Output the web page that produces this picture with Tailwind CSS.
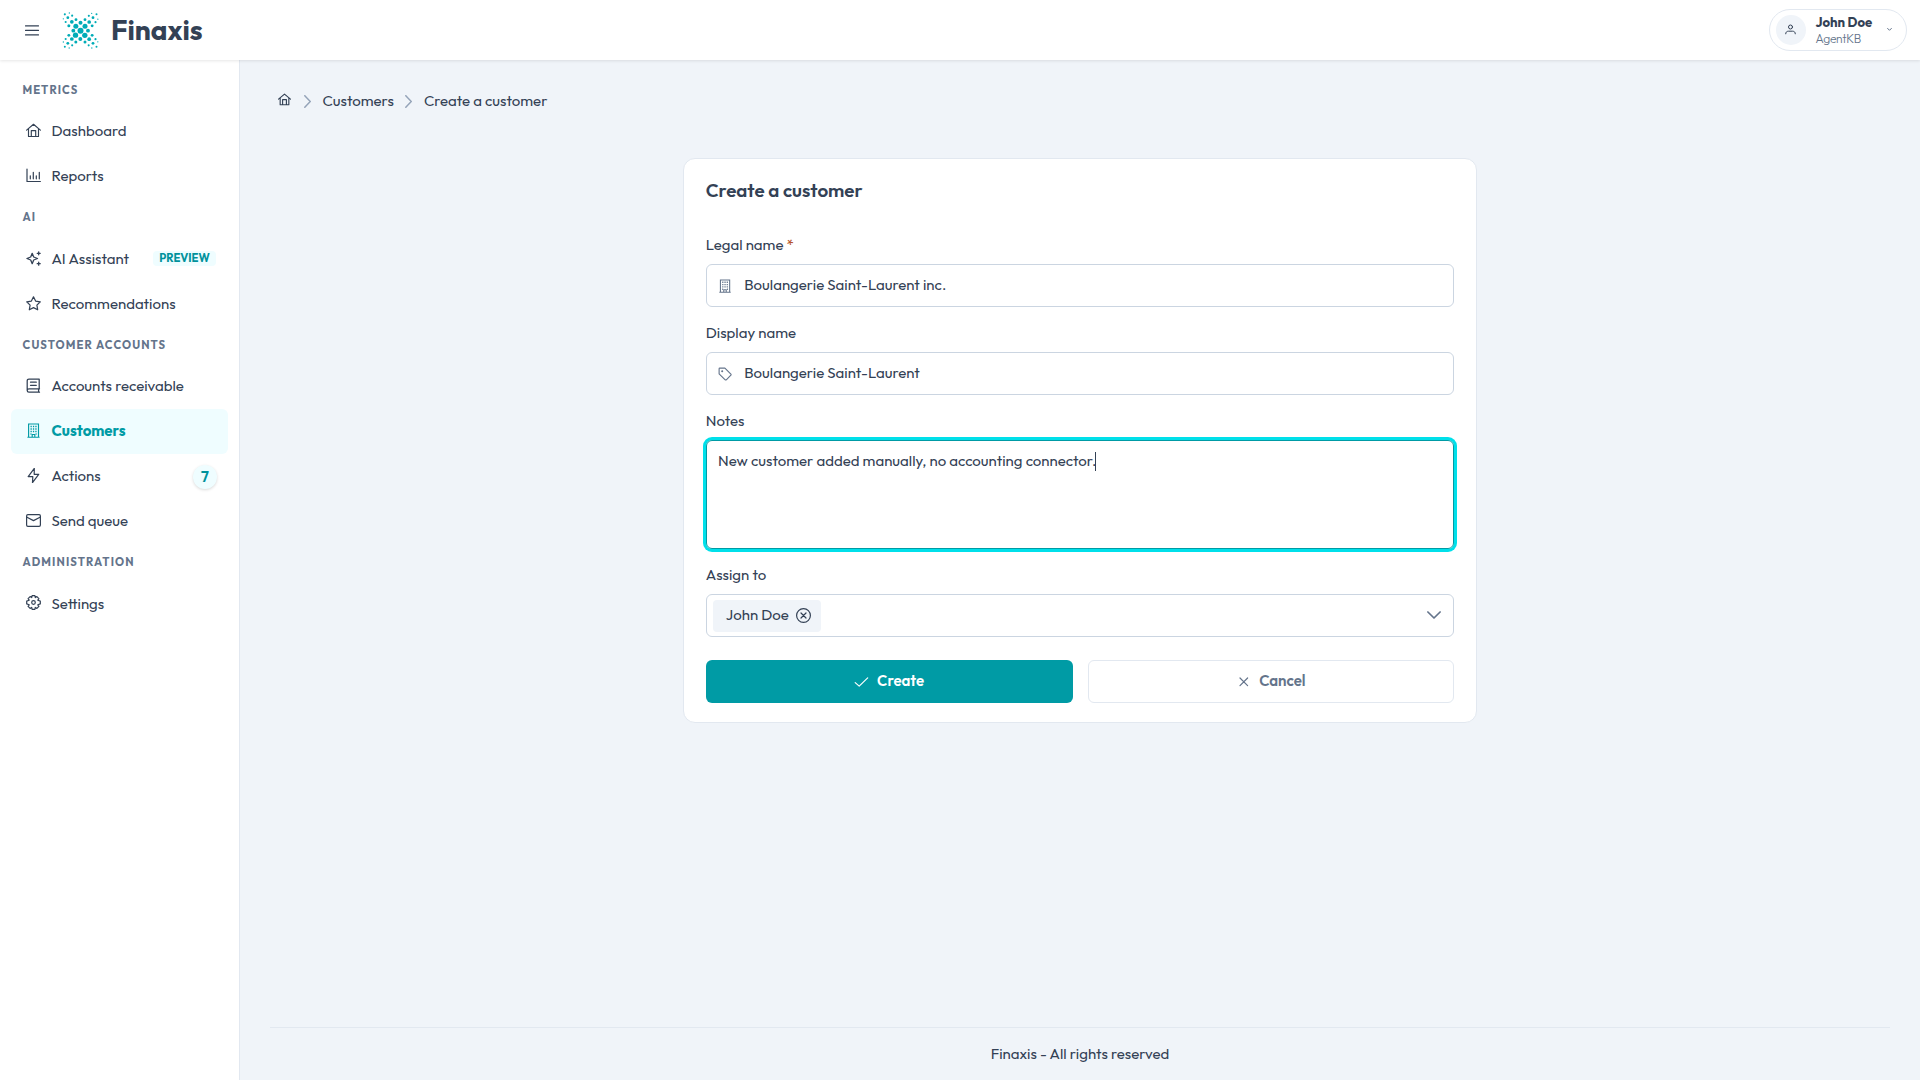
<!DOCTYPE html>
<html lang="en">

<head>
    <meta charset="UTF-8" />
    <meta name="viewport" content="width=device-width, initial-scale=1.0" />
    <title>Finaxis - Create a customer</title>
    <script src="https://cdn.jsdelivr.net/npm/@tailwindcss/browser@4"></script>
</head>

<body class="h-screen flex flex-col overflow-hidden bg-[#f0f4f9] text-[#334155] text-[15px] leading-[22.5px] font-['Outfit','Lato',sans-serif]">
    <!-- shared icons -->
    <svg class="hidden">
        <symbol id="home" viewBox="0 0 15 15">
            <path d="M.6 7.1 7.5 1.3l6.9 5.8M2.5 5.6v7.9h10V5.6M5.3 13.5V7.6h4.4v5.9" />
        </symbol>
        <symbol id="building" viewBox="0 0 15 15">
            <path d="M2.6 14V1h9.9v13M1.4 14.2h12.2M6.2 14v-2.5h2.6V14" />
            <path d="M4.5 3.5h1.3M6.9 3.5h1.3M9.3 3.5h1.3M4.5 6h1.3M6.9 6h1.3M9.3 6h1.3M4.5 8.5h1.3M6.9 8.5h1.3M9.3 8.5h1.3M4.5 11h1M9.6 11h1" stroke-width="1.4" />
        </symbol>
    </svg>

    <header class="relative z-10 h-[60px] shrink-0 bg-white shadow-[0_1px_3px_rgba(0,0,0,0.1)] flex items-center justify-between pl-[25px] pr-[13px]">
        <div class="flex items-center">
            <svg class="w-[14px] h-[15px]" viewBox="0 0 14 15" fill="none" stroke="#334155" stroke-width="1.3" stroke-linecap="round">
                <path d="M.5 2.9h13M.5 7.4h13M.5 11.9h13" />
            </svg>
            <svg class="ml-[23px] w-[37px] h-[37px]" viewBox="37 20 111 111" fill="#00acb7">
                <circle cx="92.5" cy="76" r="9" />
                <circle cx="78.5" cy="62.5" r="7.5" /><circle cx="106" cy="62.5" r="7.5" />
                <circle cx="77.5" cy="89.5" r="8" /><circle cx="105.5" cy="90" r="8" />
                <circle cx="92.5" cy="52" r="6" /><circle cx="71" cy="76" r="5.8" />
                <circle cx="115" cy="76" r="5.8" /><circle cx="92" cy="101" r="6" />
                <circle cx="66.5" cy="49.5" r="5.6" /><circle cx="118.5" cy="50" r="5.6" />
                <circle cx="66.5" cy="101" r="5.6" /><circle cx="118.5" cy="101.5" r="5.6" />
                <circle cx="79" cy="43" r="4.3" /><circle cx="106" cy="43" r="4.3" />
                <circle cx="57.5" cy="61" r="4.5" /><circle cx="127.5" cy="61.5" r="4.3" />
                <circle cx="57.5" cy="90" r="4.3" /><circle cx="127.5" cy="90" r="4.3" />
                <circle cx="78.5" cy="110" r="4.5" /><circle cx="106" cy="110" r="4.5" />
                <circle cx="54.5" cy="37" r="4.2" /><circle cx="130" cy="37" r="4.2" />
                <circle cx="54.5" cy="114" r="4.2" /><circle cx="130" cy="114" r="4.2" />
                <circle cx="67.5" cy="31" r="3.2" /><circle cx="117.5" cy="31.5" r="3.2" />
                <circle cx="48" cy="50" r="3.2" /><circle cx="137.5" cy="50.5" r="3.2" />
                <circle cx="48" cy="101" r="3.2" /><circle cx="137.5" cy="101.5" r="3.2" />
                <circle cx="67.5" cy="120" r="3.2" /><circle cx="117" cy="120" r="3.2" />
                <circle cx="45.5" cy="27" r="3.2" /><circle cx="140.5" cy="27" r="3" />
                <circle cx="45.5" cy="124" r="3" /><circle cx="140.5" cy="124" r="3" />
                <circle cx="59" cy="23" r="2" /><circle cx="126" cy="24" r="2" />
                <circle cx="41" cy="40.5" r="2" /><circle cx="144.5" cy="41.5" r="2" />
                <circle cx="41" cy="110" r="2" /><circle cx="144.5" cy="109.5" r="2" />
                <circle cx="58.5" cy="128" r="2" /><circle cx="126.5" cy="128" r="2" />
            </svg>
            <span class="ml-[12px] text-[28px] leading-9 font-bold">Finaxis</span>
        </div>
        <div class="w-[138px] h-[42px] rounded-full border border-[#e2e8f0] flex items-center pl-1.5">
            <div class="w-[30px] h-[30px] rounded-full bg-[#f0f4f9] flex items-center justify-center">
                <svg class="w-[11px] h-[11px] mb-px mr-px" viewBox="0 0 11 11" fill="none" stroke="#334155" stroke-width="1" stroke-linecap="round">
                    <circle cx="5.5" cy="3" r="2" />
                    <path d="M.7 9.8C.7 7.9 2 7.2 3.5 7.2h4c1.5 0 2.8.7 2.8 2.6" />
                </svg>
            </div>
            <div class="ml-[9.5px] w-[68.5px]">
                <p class="text-[13.125px] leading-[16px] font-bold">John Doe</p>
                <p class="relative top-px text-[12px] leading-[16px] font-light tracking-[-0.25px] text-[#64748b]">AgentKB</p>
            </div>
            <svg class="ml-[3px] w-[5px] h-[5px] mb-0.5" viewBox="0 0 5 5" fill="none" stroke="#64748b" stroke-width="1" stroke-linecap="round">
                <path d="m.6 1.4 1.9 1.9 1.9-1.9" />
            </svg>
        </div>
    </header>

    <div class="flex flex-1 min-h-0">
        <aside class="w-60 shrink-0 bg-white border-r border-[#e2e8f0] pt-[11.5px] px-[11px]">
            <h6 class="h-[37.5px] flex items-center pl-[11.5px] text-[11.25px] font-bold tracking-[1.125px] text-[#64748b]">METRICS</h6>
            <a class="h-[45px] flex items-center gap-[10.5px] px-[15px]">
                <svg class="w-[15px] h-[15px] mb-0.5" fill="none" stroke="currentColor" stroke-width="1.15" stroke-linecap="round" stroke-linejoin="round"><use href="#home" /></svg>
                Dashboard
            </a>
            <a class="h-[45px] flex items-center gap-[10.5px] px-[15px]">
                <svg class="w-[15px] h-[15px] mb-0.5" viewBox="0 0 15 15" fill="none" stroke="currentColor" stroke-width="1.2" stroke-linecap="round" stroke-linejoin="round">
                    <path d="M1 1v12.5h13.4M4.3 10.8V7.8M7.3 10.8V4.3M10.3 10.8V7.8M13.3 10.8V4.3" />
                </svg>
                Reports
            </a>
            <h6 class="h-[37.5px] flex items-center pb-[1.5px] pl-[11.5px] text-[11.25px] font-bold tracking-[1.125px] text-[#64748b]">AI</h6>
            <a class="h-[45px] flex items-center gap-[10.5px] pl-[15px] pr-3">
                <svg class="w-[15px] h-[15px] mb-0.5" viewBox="0 0 15 15" fill="none" stroke="currentColor" stroke-width="1.3" stroke-linecap="round" stroke-linejoin="round">
                    <path d="M6.2 2.3 7.7 6l3.8 1.5L7.7 9l-1.5 3.7L4.7 9 .9 7.5 4.7 6z" />
                    <path d="M12.7.8v3M11.2 2.3h3M12.7 11.2v3M11.2 12.7h3" />
                </svg>
                AI Assistant
                <span class="ml-auto mb-0.5 h-[15px] w-[63px] rounded bg-[#effdff] text-center text-[11.25px] leading-[14px] font-bold text-[#00929c]">PREVIEW</span>
            </a>
            <a class="h-[45px] flex items-center gap-[10.5px] px-[15px]">
                <svg class="w-[15px] h-[15px] mb-0.5" viewBox="0 0 15 15" fill="none" stroke="currentColor" stroke-width="1.2" stroke-linejoin="round">
                    <path d="m7.5.8 2.1 4.3 4.7.7-3.4 3.3.8 4.7-4.2-2.2-4.2 2.2.8-4.7L.7 5.8l4.7-.7z" />
                </svg>
                Recommendations
            </a>
            <h6 class="h-[37.5px] flex items-center pl-[11.5px] text-[11.25px] font-bold tracking-[1.125px] text-[#64748b]">CUSTOMER ACCOUNTS</h6>
            <a class="h-[45px] flex items-center gap-[10.5px] px-[15px]">
                <svg class="w-[15px] h-[15px] mb-0.5" viewBox="0 0 15 15" fill="none" stroke="currentColor" stroke-width="1.25" stroke-linecap="round" stroke-linejoin="round">
                    <path d="M13.2 10.8V1H3Q1.2 1 1.2 2.8v9.7Q1.2 14.2 3 14.2h10.5M1.2 12.4q0-1.6 1.8-1.6h10.5M12.6 10.8v3.4M4.5 4.2h5.8M4.5 7.3h5.8" />
                </svg>
                Accounts receivable
            </a>
            <a class="h-[45px] flex items-center gap-[10.5px] px-[15px] rounded-md bg-[#effdff] text-[#009ba5] font-bold">
                <svg class="w-[15px] h-[15px] mb-0.5" fill="none" stroke="currentColor" stroke-width="1.15"><use href="#building" /></svg>
                Customers
            </a>
            <a class="h-[45px] flex items-center gap-[10.5px] pl-[15px] pr-[11px]">
                <svg class="w-[15px] h-[15px] mb-0.5" viewBox="0 0 15 15" fill="none" stroke="currentColor" stroke-width="1.2" stroke-linejoin="round">
                    <path d="M8.3.4 2.2 8.6h4.6l-.3 6 6.2-8.3H8.2z" />
                </svg>
                Actions
                <span class="ml-auto w-6 h-6 rounded-full bg-[#effdff] shadow-[0_1px_3px_rgba(0,0,0,0.15)] text-center leading-[23px] font-semibold text-[#00929c]">7</span>
            </a>
            <a class="h-[45px] flex items-center gap-[10.5px] px-[15px]">
                <svg class="w-[15px] h-[15px] mb-0.5" viewBox="0 0 15 15" fill="none" stroke="currentColor" stroke-width="1.2" stroke-linecap="round" stroke-linejoin="round">
                    <rect x=".6" y="1.6" width="13.8" height="11.8" rx="1.3" />
                    <path d="m1 4.2 6.500 3.400L14 4.200" />
                </svg>
                Send queue
            </a>
            <h6 class="h-[37.5px] flex items-center pb-[1.5px] pl-[11.5px] text-[11.25px] font-bold tracking-[1.125px] text-[#64748b]">ADMINISTRATION</h6>
            <a class="h-[45px] flex items-center gap-[10.5px] px-[15px]">
                <svg class="w-[15px] h-[15px] mb-[3px]" viewBox="0 0 15 15" fill="none" stroke="currentColor" stroke-width="1.2" stroke-linejoin="round">
                    <path d="M6.1.7h2.8l.4 1.900 1.600-1 2 2-1.100 1.600 2.500.9v2.800l-2.500.9 1.100 1.600-2 2-1.600-1-.4 1.900H6.100l-.4-1.900-1.600 1-2-2 1.100-1.600-2.500-.9V6.100l2.500-.9-1.100-1.600 2-2 1.600 1z" />
                    <circle cx="7.5" cy="7.5" r="1.8" />
                </svg>
                Settings
            </a>
        </aside>

        <main class="flex-1 flex flex-col px-[30px]">
            <nav class="mt-[30px] h-[23px] flex items-center pl-2">
                <svg class="w-[13px] h-[13px] -mt-1" fill="none" stroke="currentColor" stroke-width="1.3" stroke-linecap="round" stroke-linejoin="round"><use href="#home" /></svg>
                <svg class="ml-[13px] w-[7px] h-[13px]" viewBox="0 0 7 13" fill="none" stroke="#94a3b8" stroke-width="1.5" stroke-linecap="round"><path d="m.8.7 5.5 5.8-5.5 5.8" /></svg>
                <span class="ml-[11.5px]">Customers</span>
                <svg class="ml-[11.5px] w-[7px] h-[13px]" viewBox="0 0 7 13" fill="none" stroke="#94a3b8" stroke-width="1.5" stroke-linecap="round"><path d="m.8.7 5.5 5.8-5.5 5.8" /></svg>
                <span class="ml-[11.5px]">Create a customer</span>
            </nav>

            <form class="mt-[45px] w-[794.5px] h-[565px] self-center bg-white border border-[#e2e8f0] rounded-xl px-[22px] pt-[17px]">
                <h5 class="text-[18.75px] leading-7 font-semibold">Create a customer</h5>

                <div class="mt-[30px] mb-2 leading-[22px]">Legal name <span class="text-[#b4532a]">*</span></div>
                <div class="h-[43px] border border-[#cbd5e1] rounded-md flex items-center gap-[12.5px] pl-[11px]">
                    <svg class="w-[14px] h-[14px] text-[#64748b]" fill="none" stroke="currentColor" stroke-width="1.15"><use href="#building" /></svg>
                    Boulangerie Saint-Laurent inc.
                </div>

                <div class="mt-[15px] mb-2 leading-[22px]">Display name</div>
                <div class="h-[43px] border border-[#cbd5e1] rounded-md flex items-center gap-[12.5px] pl-[11px]">
                    <svg class="w-[14px] h-[14px] text-[#64748b]" viewBox="0 0 15 15" fill="none" stroke="currentColor" stroke-width="1.2" stroke-linejoin="round">
                        <path d="M1.2 1.8Q1.2 1.2 1.8 1.2h5.6L13.8 7.6q.5.6 0 1.2l-4.9 4.9q-.6.5-1.2 0L1.2 7.4z" />
                        <circle cx="4.5" cy="4.6" r=".5" fill="currentColor" />
                    </svg>
                    Boulangerie Saint-Laurent
                </div>

                <div class="mt-[15px] mb-2 leading-[22px]">Notes</div>
                <div class="h-[109px] border border-[#009ba5] rounded-md ring-3 ring-[#00e0ea] pl-[11.25px] pt-[9px] flex items-start">
                    New customer added manually, no accounting connector.<span class="-ml-px mt-0.5 w-px h-[19px] bg-[#334155]"></span>
                </div>

                <div class="mt-[15px] mb-2 leading-[22px]">Assign to</div>
                <div class="h-[43px] border border-[#cbd5e1] rounded-md flex items-center pl-1.5 pr-[12px]">
                    <div class="w-[108px] h-8 rounded bg-[#f0f4f9] flex items-center justify-between pl-[13px] pr-2.5">
                        John Doe
                        <svg class="w-[15px] h-[15px]" viewBox="0 0 15 15" fill="none" stroke="#334155" stroke-width="1.2" stroke-linecap="round">
                            <circle cx="7.5" cy="7.5" r="6.9" />
                            <path d="m5 5 5 5M10 5l-5 5" />
                        </svg>
                    </div>
                    <svg class="ml-auto w-[14px] h-[8px] mb-px" viewBox="0 0 14 8" fill="none" stroke="#64748b" stroke-width="1.7" stroke-linecap="round" stroke-linejoin="round">
                        <path d="m.9 1 6.1 6 6.1-6" />
                    </svg>
                </div>

                <div class="mt-[23px] grid grid-cols-2 gap-[15px] font-semibold">
                    <div class="h-[43px] rounded-md bg-[#009ba5] text-white flex items-center justify-center gap-2">
                        <svg class="w-[15px] h-[15px]" viewBox="0 0 15 15" fill="none" stroke="currentColor" stroke-width="1.2" stroke-linecap="round" stroke-linejoin="round"><path d="m1.2 8.6 4 3.5 8.5-8.2" /></svg>
                        Create
                    </div>
                    <div class="h-[43px] rounded-md border border-[#e2e8f0] text-[#64748b] flex items-center justify-center gap-2">
                        <svg class="w-[15px] h-[15px]" viewBox="0 0 15 15" fill="none" stroke="currentColor" stroke-width="1.2" stroke-linecap="round"><path d="m4 4 7.6 7.6M11.6 4 4 11.6" /></svg>
                        Cancel
                    </div>
                </div>
            </form>

            <footer class="mt-auto h-[53px] border-t border-[#e2e8f0] flex items-center justify-center">Finaxis - All rights reserved</footer>
        </main>
    </div>
</body>

</html>
